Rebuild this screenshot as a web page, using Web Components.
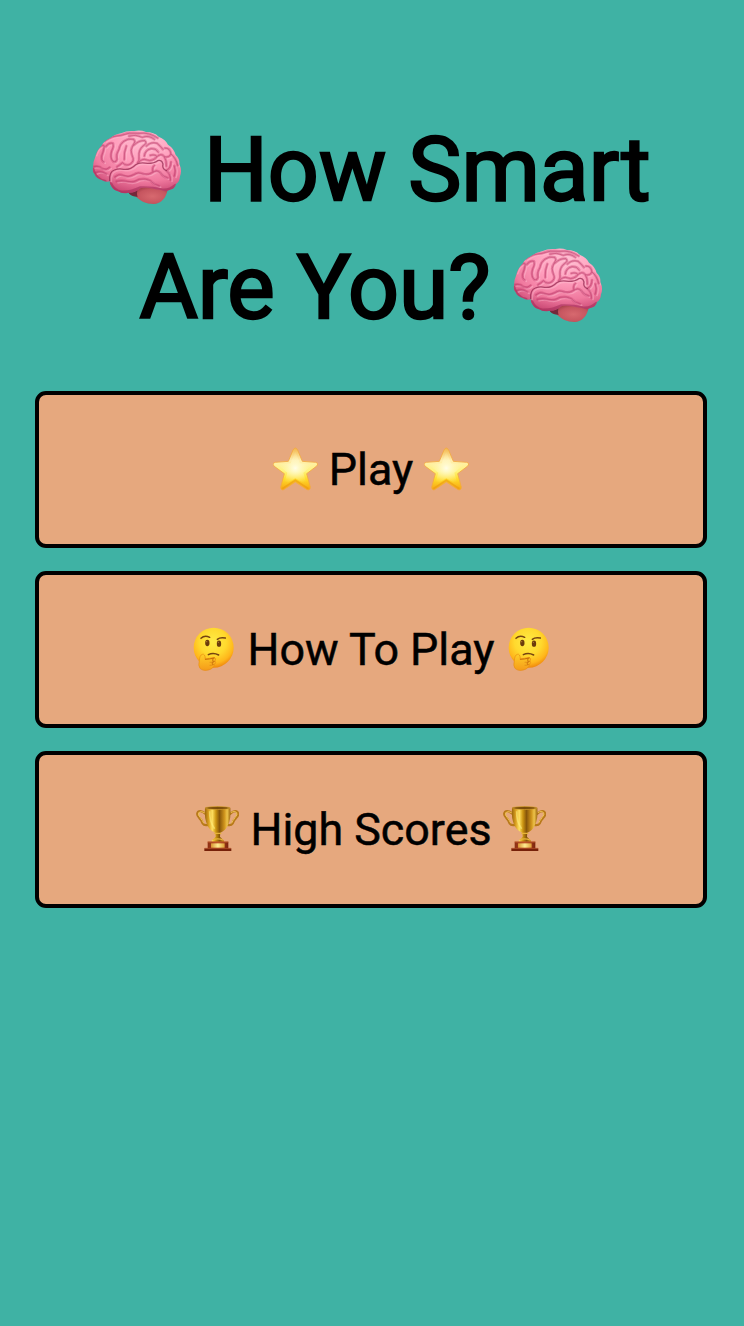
<!DOCTYPE html>
<html lang="en">
<head>
<meta charset="utf-8">
<title>How Smart Are You?</title>
<style>
html,body{margin:0;background:#3fb2a4}
body{font-family:Roboto,"Liberation Sans",sans-serif;color:#000}
</style>
</head>
<body>
<quiz-home></quiz-home>
<script>
const outline = 'M27 142Q27 125 34 110Q39 90 53 77Q60 63 78 55Q92 43 111 40Q129 31 151 33Q169 29 186 36Q210 36 224 50Q244 57 252 74Q270 85 275 105Q288 117 286 132Q295 151 288 169Q287 187 276 192Q272 208 256 210Q245 216 232 210Q215 208 201 205Q182 200 169 205Q153 220 133 218Q117 223 102 214Q88 211 82 199Q76 191 78 184Q66 188 53 180Q37 176 32 163Q24 155 27 142Z';
const folds = 'M18 85Q25 65 33 62Q40 55 46 60Q44 75 38 90Q36 104 44 108M50 62Q60 48 72 52Q76 60 68 75Q62 95 72 106Q80 112 84 100Q80 85 90 70Q92 55 104 46Q118 36 134 40Q142 46 132 58Q122 72 130 90Q138 104 124 114Q112 122 100 110Q92 118 84 122M112 60Q104 80 106 100M134 58Q150 42 168 44Q176 52 162 60Q148 72 150 92Q152 104 146 110M150 108Q160 96 174 102Q190 108 204 92Q198 84 184 88M172 60Q186 46 204 52Q214 60 222 70M166 90Q168 72 186 68Q200 66 208 78M204 92Q216 80 226 92Q240 96 246 84Q244 66 228 66M78 152Q90 142 102 148Q118 156 134 146Q146 136 164 144Q180 148 192 138Q204 130 214 140Q222 152 236 156M192 138Q188 124 196 118M82 166Q100 162 112 166Q134 172 150 160Q170 156 184 164Q194 176 210 180M14 122Q30 118 40 128Q52 134 62 124M20 140Q34 132 52 144M232 134Q246 126 246 108M232 134Q246 144 244 162M226 92Q234 104 232 120M48 44Q70 28 96 28Q120 18 150 22Q180 18 206 36M120 30Q140 24 160 34Q180 26 196 40M246 84Q262 96 266 118M256 120Q262 134 256 150';
const fissure = 'M62 164Q60 138 76 132Q90 126 104 130Q124 132 140 116Q150 108 176 112Q196 112 206 104Q218 100 222 114Q218 128 232 134';
const art = {
brain: ['24 27 270 228', 90, 76, `
<defs><radialGradient id="g" cx=".61" cy=".16" r=".9"><stop offset="0" stop-color="#ffc0d3"/><stop offset=".4" stop-color="#ff9fbd"/><stop offset=".72" stop-color="#f07a9f"/><stop offset="1" stop-color="#c23e6b"/></radialGradient>
<radialGradient id="s" cx=".62" cy=".6" r=".6"><stop offset="0" stop-color="#d7696f"/><stop offset=".6" stop-color="#c6555f"/><stop offset="1" stop-color="#94343f"/></radialGradient>
<clipPath id="c"><path d="${outline}"/></clipPath><filter id="b"><feGaussianBlur stdDeviation="2"/></filter></defs>
<path d="M131 212Q138 228 154 228C168 243 187 252 208 252C232 252 248 232 251 207L188 194Z" fill="url(#s)"/>
<path d="M131 213Q151 211 163 204Q156 219 161 230Q140 232 131 213Z" fill="#74283a"/>
<path d="${outline}" fill="url(#g)"/>
<g clip-path="url(#c)" fill="none" stroke-linecap="round" stroke-linejoin="round">
<g transform="translate(15 18)"><path d="${folds}${fissure}" transform="translate(5 4)" stroke="#ffc2d5" stroke-width="5" opacity=".4" filter="url(#b)"/><path d="${folds}" stroke="#c83f70" stroke-width="8" opacity=".4" filter="url(#b)"/><path d="${folds}" stroke="#b83b68" stroke-width="2.6" opacity=".55"/><path d="${fissure}" stroke="#942b52" stroke-width="4" opacity=".75"/></g>
<path d="M80 190Q91 213 112 216Q139 218 170 203Q205 202 232 209Q255 213 274 196M27 148Q34 178 63 184" stroke="#9c2854" stroke-width="9" opacity=".5" filter="url(#b)"/></g>`],
star: ['15 18 135 132', 45, 44, `
<defs><linearGradient id="g" x2="0" y2="1"><stop stop-color="#f3b64b"/><stop offset=".3" stop-color="#ffeeb0"/><stop offset=".56" stop-color="#fff37b"/><stop offset=".74" stop-color="#ffdb29"/><stop offset="1" stop-color="#f7a313"/></linearGradient><radialGradient id="h"><stop stop-color="#fffde8"/><stop offset="1" stop-color="#fff5a6" stop-opacity="0"/></radialGradient></defs>
<path d="M75 27Q82 15 89 27L103 61L143 64Q154 67 145 76L116 98L127 138Q127 149 117 146L82 123L47 146Q38 149 38 138L49 98L19 76Q10 67 22 64L61 61Z" fill="url(#g)" stroke="#f3a941" stroke-width="2.5"/>
<path d="M82 31L96 67L135 70L106 95L117 132L82 112L47 132L58 95L29 70L68 67Z" fill="url(#h)"/>
<path d="M43 143L82 118L121 143" fill="none" stroke="#eb9612" stroke-width="5" opacity=".6"/>`],
think: ['15 12 129 132', 43, 44, `
<defs><radialGradient id="g" cx=".48" cy=".35" r=".67"><stop stop-color="#ffeb45"/><stop offset=".5" stop-color="#ffd92e"/><stop offset=".8" stop-color="#ffb61b"/><stop offset="1" stop-color="#ed810a"/></radialGradient><linearGradient id="h" x2="0" y2="1"><stop stop-color="#ffcd28"/><stop offset="1" stop-color="#f59b19"/></linearGradient></defs>
<circle cx="80" cy="74" r="60" fill="url(#g)"/>
<ellipse cx="61" cy="60" rx="6.5" ry="9.5" fill="#6b3b0c"/><ellipse cx="96" cy="62" rx="6.5" ry="9.5" fill="#6b3b0c"/><circle cx="59" cy="56" r="2" fill="#b37b33"/><circle cx="94" cy="58" r="2" fill="#b37b33"/>
<path d="M42 46Q53 35 68 43M91 49Q99 42 115 45M64 95Q79 87 95 96" fill="none" stroke="#754311" stroke-width="4.5" stroke-linecap="round"/>
<path d="M46 94Q54 91 55 108Q69 106 81 103Q90 106 84 114Q89 119 82 125Q80 137 64 141Q48 145 39 136Q33 129 37 113Q38 96 46 94Z" fill="url(#h)" stroke="#e98c10" stroke-width="2"/>
<path d="M55 109Q66 109 82 105" fill="none" stroke="#c86c08" stroke-width="3" stroke-linecap="round"/><path d="M69 118Q77 119 83 115M69 127Q75 128 81 124" fill="none" stroke="#d98212" stroke-width="2" stroke-linecap="round"/>
<path d="M80 106Q73 111 80 115Q73 120 78 125" fill="none" stroke="#c06408" stroke-width="4" opacity=".6"/>`],
trophy: ['18 15 129 141', 43, 47, `
<defs><linearGradient id="g"><stop stop-color="#9a660d"/><stop offset=".15" stop-color="#d99f1f"/><stop offset=".29" stop-color="#ffe061"/><stop offset=".43" stop-color="#cc9511"/><stop offset=".57" stop-color="#87560a"/><stop offset=".76" stop-color="#ce931c"/><stop offset=".87" stop-color="#eec34a"/><stop offset="1" stop-color="#9a640e"/></linearGradient><linearGradient id="h"><stop stop-color="#8b2e13"/><stop offset=".5" stop-color="#bd4f25"/><stop offset="1" stop-color="#7b240d"/></linearGradient><linearGradient id="p"><stop stop-color="#d99431"/><stop offset=".5" stop-color="#ffec91"/><stop offset="1" stop-color="#dd9f36"/></linearGradient></defs>
<g fill="none" stroke-linecap="round"><path d="M46 41Q32 29 24 36Q18 44 28 54Q35 60 38 70Q43 78 56 74M121 41Q134 29 142 36Q148 44 138 54Q131 60 128 70Q123 78 110 74" stroke="#b8791a" stroke-width="7"/><path d="M44 38Q33 31 26 38Q22 44 31 53Q38 62 41 69M122 38Q134 31 140 38Q144 44 135 53Q129 61 125 69" stroke="#efc254" stroke-width="3"/></g>
<path d="M45 23Q83 17 121 23Q124 56 113 77Q106 92 91 98L90 110L102 122V129H65V122L77 110L76 98Q60 92 53 77Q42 56 45 23Z" fill="url(#g)"/>
<ellipse cx="83" cy="24" rx="37" ry="4.5" fill="#7b4c0a" stroke="#d6a030" stroke-width="2"/>
<path d="M59 34Q58 66 74 86" fill="none" stroke="#fff07f" stroke-width="5" opacity=".55"/><path d="M73 100H94M68 120Q83 113 99 120" fill="none" stroke="#e7b43a" stroke-width="4"/>
<path d="M53 125H115V146H53Z" fill="url(#h)"/><path d="M53 126H115" stroke="#c8622f" stroke-width="2.5"/><path d="M43 145H124V153H43Z" fill="#762109"/><path d="M44 145H123" stroke="#b64f27" stroke-width="2"/><path d="M63 130H104V143H63Z" fill="url(#p)"/>`]
};

class QuizIcon extends HTMLElement {
  connectedCallback() {
    const [box, w, h, body] = art[this.getAttribute('name')];
    this.attachShadow({mode: 'open'}).innerHTML = `<style>:host{display:block;flex:none}svg{display:block}</style><svg aria-hidden="true" width="${w}" height="${h}" viewBox="${box}">${body}</svg>`;
  }
}
customElements.define('quiz-icon', QuizIcon);

class QuizTitle extends HTMLElement {
  connectedCallback() {
    this.attachShadow({mode: 'open'}).innerHTML = `<style>
:host{display:block}
h1{margin:0;font-size:89.5px;font-weight:400;line-height:118px;-webkit-text-stroke:2.4px #000}
.line{display:flex;align-items:center;justify-content:center;height:118px;white-space:nowrap}
.line span{padding-top:1px}
.first{gap:22.5px}.second{gap:22px}
quiz-icon{margin-top:-4px}
</style><h1><span class="line first"><quiz-icon name="brain"></quiz-icon><span>How Smart</span></span><span class="line second"><span>Are You?</span><quiz-icon name="brain"></quiz-icon></span></h1>`;
  }
}
customElements.define('quiz-title', QuizTitle);

class MenuButton extends HTMLElement {
  connectedCallback() {
    const icon = this.getAttribute('icon');
    this.attachShadow({mode: 'open'}).innerHTML = `<style>
:host{display:block}
button{display:flex;align-items:center;justify-content:center;gap:11px;box-sizing:border-box;width:100%;height:157px;margin:0;padding:0;border:4px solid #000;border-radius:11px;background:#e6a87e;color:#000;font:400 44.8px/53px Roboto,"Liberation Sans",sans-serif;white-space:nowrap}
span{-webkit-text-stroke:.5px #000}
quiz-icon{margin-bottom:2px}
button.think{gap:12px}
</style><button class="${icon}"><quiz-icon name="${icon}"></quiz-icon><span><slot></slot></span><quiz-icon name="${icon}"></quiz-icon></button>`;
  }
}
customElements.define('menu-button', MenuButton);

class QuizHome extends HTMLElement {
  connectedCallback() {
    this.attachShadow({mode: 'open'}).innerHTML = `<style>
:host{display:block;box-sizing:border-box;min-height:1326px;padding:110px 37px 0 35px;background:#3fb2a4}
nav{display:grid;gap:23px;margin-top:45px}
</style><quiz-title></quiz-title><nav><menu-button icon="star">Play</menu-button><menu-button icon="think">How To Play</menu-button><menu-button icon="trophy">High Scores</menu-button></nav>`;
  }
}
customElements.define('quiz-home', QuizHome);
</script>
</body>
</html>
